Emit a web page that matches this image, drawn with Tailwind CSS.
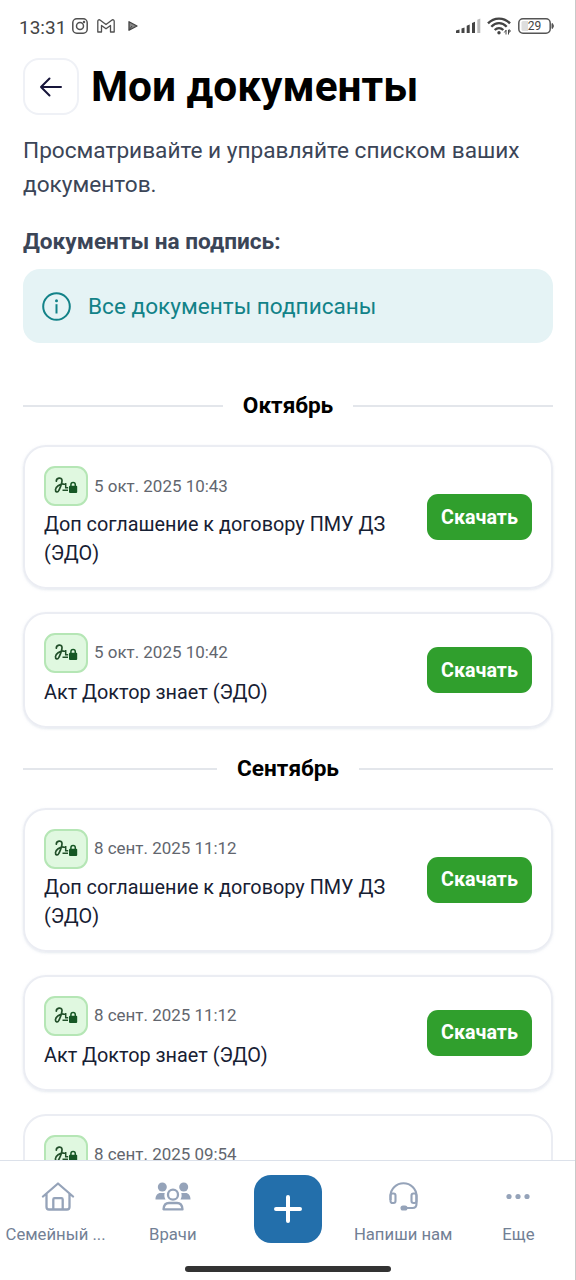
<!DOCTYPE html>
<html lang="ru">
<head>
<meta charset="utf-8">
<title>Мои документы</title>
<script src="https://cdn.jsdelivr.net/npm/@tailwindcss/browser@4"></script>
</head>
<body class="bg-white font-['Roboto',sans-serif]">
<svg class="hidden">
  <symbol id="sign" viewBox="0 0 24 18">
    <path d="M2.300 4.200C2.200 1 7.800-.3 8 3.200c.1 3.800-1.900 7.500-3.200 10.300C3.800 15.700 1.200 15.300 1.500 12.500 1.900 9.500 5.500 7.300 9 7" fill="none" stroke="#22502a" stroke-width="1.700" stroke-linecap="round"/>
    <path d="M9 7.300h3M11.700 6v4.700h2.500M8.500 13.300h5.500" fill="none" stroke="#22502a" stroke-width="1.500"/>
    <rect x="15" y="8.800" width="8.200" height="7.200" rx="1" fill="#155724"/>
    <path d="M16.900 9.300V7.700a2.200 2.200 0 0 1 4.400 0V9.300" fill="none" stroke="#155724" stroke-width="1.500"/>
  </symbol>
</svg>
<div class="relative flex h-[1280px] w-[576px] flex-col overflow-hidden border-r border-[#c9c9c9] bg-white">
  <header class="flex h-[52px] shrink-0 items-center justify-between pl-[19px] pr-[21px]">
    <div class="flex items-center text-[#444]">
      <span class="mt-[2px] w-[53px] text-[19px] leading-none">13:31</span>
      <svg class="h-4 w-4" viewBox="0 0 16 16" fill="none" stroke="#505050" stroke-width="1.500"><rect x=".8" y=".8" width="14.400" height="14.400" rx="4"/><circle cx="8" cy="8" r="3.500"/><circle cx="12" cy="4" r=".5"/></svg>
      <svg class="ml-[9px] h-[14px] w-[18px]" viewBox="0 0 18 14" fill="none" stroke="#505050" stroke-width="1.300" stroke-linejoin="round"><path d="M.8 2.300C.8.700 2.300.4 3.300 1.200L9 5.600l5.700-4.400c1-.8 2.500-.5 2.500 1.100V13h-3.700V6.400L9 9.800 4.500 6.400V13H.8Z"/></svg>
      <svg class="ml-[13px] h-[10px] w-[10px]" viewBox="0 0 10 10"><path d="M1 .7 9 5 1 9.300Z" fill="#888" stroke="#444" stroke-width="1.300" stroke-linejoin="round"/><path d="M1 9 4 5" stroke="#444"/></svg>
    </div>
    <div class="flex items-center">
      <svg class="h-4 w-[25px]" viewBox="0 0 25 16" fill="#444"><path d="M0 12.500 3.500 11.500V15H0ZM5.500 10.500 8.500 9.500V15h-3ZM10.700 7.800l3-1.200V15h-3ZM16 5l3-1.200V15h-3Z"/><path d="M21.300 1.700l3-1.200V15h-3Z" fill="#bbb"/></svg>
      <svg class="ml-[6px] h-[18px] w-[24px]" viewBox="0 0 24 18" fill="none" stroke="#444" stroke-width="2.300"><path d="M1 6.400C7-.1 17-.1 23 6.400M4.300 9.800c4.500-4.800 10.900-4.800 15.400 0M7.700 13c2.500-2.600 6.100-2.600 8.600 0"/><circle cx="12" cy="15.700" r="1.700" fill="#444" stroke="none"/><path d="M19 13v4.500M17.300 15.500l1.700-2.300M21.500 17.500v-4.500h1.500v2h-1.500" stroke-width="1"/></svg>
      <div class="relative ml-[7px] h-4 w-[36px]">
        <svg class="absolute inset-0 h-4 w-[36px]" viewBox="0 0 36 16" fill="none"><rect x=".8" y=".8" width="31.400" height="14.400" rx="4.200" stroke="#555" stroke-width="1.500"/><path d="M5 3h5v10H5a1.500 1.500 0 0 1-1.500-1.500v-7A1.500 1.500 0 0 1 5 3Z" fill="#dedede"/><path d="M34 5.500c1.800.3 1.800 4.700 0 5Z" fill="#555" stroke="#555"/></svg>
        <span class="relative block w-[33px] text-center text-[12px] leading-[17px] text-[#444]">29</span>
      </div>
    </div>
  </header>
  <main class="flex h-[1108px] shrink-0 flex-col overflow-hidden px-[23px] pt-[6px] pr-[22px]">
    <div class="flex h-[57px] shrink-0 items-center">
      <button class="flex h-[57px] w-[56px] items-center justify-center rounded-[16px] border-2 border-[#eff1f6]">
        <svg class="h-[20px] w-[24px]" viewBox="0 0 24 20" fill="none" stroke="#17153a" stroke-width="2" stroke-linecap="round" stroke-linejoin="round"><path d="M22 10H2M10.500 1.500 2 10l8.500 8.500"/></svg>
      </button>
      <h1 class="ml-[12px] mt-[2px] whitespace-nowrap text-[42.400px] font-bold leading-none text-black">Мои документы</h1>
    </div>
    <p class="mt-[19px] shrink-0 text-[22.640px] leading-[34px] text-[#3b4557]">Просматривайте и управляйте списком ваших документов.</p>
    <h2 class="mt-[23px] shrink-0 text-[22.620px] font-bold leading-[34px] text-[#3b4557]">Документы на подпись:</h2>
    <div class="mt-[10px] flex h-[74px] shrink-0 items-center rounded-[17px] bg-[#e5f3f5] pl-[19px]">
      <svg class="h-[29px] w-[29px]" viewBox="0 0 29 29" fill="none" stroke="#128288" stroke-width="2"><circle cx="14.500" cy="14.500" r="13.300"/><path d="M14.500 12.200v9.300"/><circle cx="14.500" cy="8.700" r="1.500" fill="#128288" stroke="none"/></svg>
      <span class="ml-[17px] mt-[2px] text-[22.620px] text-[#128288]">Все документы подписаны</span>
    </div>
    <div class="mt-[46px] flex h-[34px] shrink-0 items-center gap-[20px]"><div class="h-[1.500px] flex-1 bg-[#e3e6eb]"></div><h3 class="text-[22.620px] font-bold">Октябрь</h3><div class="h-[1.500px] flex-1 bg-[#e3e6eb]"></div></div>

    <article class="mt-[22px] flex h-[144px] shrink-0 items-center justify-between rounded-[23px] border-2 border-[#ebedf3] px-[19px] shadow-sm shadow-slate-300/40">
      <div><div class="flex items-center"><span class="flex h-[40px] w-[44px] items-center justify-center rounded-[11px] border-2 border-[#b5e6b5] bg-[#e0f8e0]"><svg class="h-[18px] w-[24px]"><use href="#sign"/></svg></span><time class="ml-[6px] mt-px text-[16.950px] text-[#62666e]">5 окт. 2025 10:43</time></div><p class="mt-[5.500px] w-[360px] text-[19.840px] leading-[28.300px] text-[#172033]">Доп соглашение к договору ПМУ ДЗ (ЭДО)</p></div>
      <button class="h-[46px] w-[105px] shrink-0 rounded-[11px] bg-[#309f2d] pt-px text-[19.700px] font-bold text-white">Скачать</button>
    </article>
    <article class="mt-[23px] flex h-[116px] shrink-0 items-center justify-between rounded-[23px] border-2 border-[#ebedf3] px-[19px] shadow-sm shadow-slate-300/40">
      <div><div class="flex items-center"><span class="flex h-[40px] w-[44px] items-center justify-center rounded-[11px] border-2 border-[#b5e6b5] bg-[#e0f8e0]"><svg class="h-[18px] w-[24px]"><use href="#sign"/></svg></span><time class="ml-[6px] text-[16.950px] text-[#62666e]">5 окт. 2025 10:42</time></div><p class="mt-[6px] w-[360px] text-[19.840px] leading-[28.300px] text-[#172033]">Акт Доктор знает (ЭДО)</p></div>
      <button class="h-[46px] w-[105px] shrink-0 rounded-[11px] bg-[#309f2d] pt-px text-[19.700px] font-bold text-white">Скачать</button>
    </article>
    <div class="mt-[24px] flex h-[34px] shrink-0 items-center gap-[20px]"><div class="h-[1.500px] flex-1 bg-[#e3e6eb]"></div><h3 class="text-[22.620px] font-bold">Сентябрь</h3><div class="h-[1.500px] flex-1 bg-[#e3e6eb]"></div></div>
    <article class="mt-[22px] flex h-[144px] shrink-0 items-center justify-between rounded-[23px] border-2 border-[#ebedf3] px-[19px] shadow-sm shadow-slate-300/40">
      <div><div class="flex items-center"><span class="flex h-[40px] w-[44px] items-center justify-center rounded-[11px] border-2 border-[#b5e6b5] bg-[#e0f8e0]"><svg class="h-[18px] w-[24px]"><use href="#sign"/></svg></span><time class="ml-[6px] text-[16.950px] text-[#62666e]">8 сент. 2025 11:12</time></div><p class="mt-[5.500px] w-[360px] text-[19.840px] leading-[28.300px] text-[#172033]">Доп соглашение к договору ПМУ ДЗ (ЭДО)</p></div>
      <button class="h-[46px] w-[105px] shrink-0 rounded-[11px] bg-[#309f2d] text-[19.700px] font-bold text-white">Скачать</button>
    </article>
    <article class="mt-[23px] flex h-[116px] shrink-0 items-center justify-between rounded-[23px] border-2 border-[#ebedf3] px-[19px] shadow-sm shadow-slate-300/40">
      <div><div class="flex items-center"><span class="flex h-[40px] w-[44px] items-center justify-center rounded-[11px] border-2 border-[#b5e6b5] bg-[#e0f8e0]"><svg class="h-[18px] w-[24px]"><use href="#sign"/></svg></span><time class="ml-[6px] text-[16.950px] text-[#62666e]">8 сент. 2025 11:12</time></div><p class="mt-[6px] w-[360px] text-[19.840px] leading-[28.300px] text-[#172033]">Акт Доктор знает (ЭДО)</p></div>
      <button class="h-[46px] w-[105px] shrink-0 rounded-[11px] bg-[#309f2d] text-[19.700px] font-bold text-white">Скачать</button>
    </article>
    <article class="mt-[23px] h-[116px] shrink-0 rounded-[23px] border-2 border-[#ebedf3] px-[19px] pt-[19px]">
      <div class="flex items-center"><span class="flex h-[40px] w-[44px] items-center justify-center rounded-[11px] border-2 border-[#b5e6b5] bg-[#e0f8e0]"><svg class="h-[18px] w-[24px]"><use href="#sign"/></svg></span><time class="ml-[6px] text-[16.950px] text-[#62666e]">8 сент. 2025 09:54</time></div>
    </article>
  </main>
  <nav class="flex h-[120px] shrink-0 flex-col items-center border-t border-[#dce1ea] bg-white">
    <div class="grid h-[105px] w-[576px] shrink-0 grid-cols-5 self-start text-[16.700px] leading-[24px] text-[#728095]">
      <div class="flex flex-col items-center pt-[21px]">
        <svg class="h-[29px] w-[34px]" viewBox="0 0 34 29" fill="none" stroke="#95a3b9" stroke-width="2.300" stroke-linecap="round" stroke-linejoin="round"><path d="M2 14.500 17 1.500l15 13M5.500 12v13c0 1.500 1 2.500 2.500 2.500h18c1.500 0 2.500-1 2.500-2.500V12M12.300 27V17.500c0-.8.500-1.300 1.300-1.300h6.800c.8 0 1.300.5 1.300 1.300V27"/></svg>
        <span class="mt-[12px] -ml-[4px] whitespace-nowrap">Семейный ...</span>
      </div>
      <div class="flex flex-col items-center pt-[21px]">
        <svg class="h-[29px] w-[36px]" viewBox="0 0 36 29" fill="#95a3b9"><circle cx="7.300" cy="5" r="4.500"/><circle cx="28.700" cy="5" r="4.500"/><path d="M.5 17.500c0-4 2-6.500 5-6.500h4.200c-.7 2.400-.3 4.500.8 6.500ZM35.500 17.500c0-4-2-6.500-5-6.500h-4.200c.7 2.400.3 4.500-.8 6.500Z"/><g fill="none" stroke="#95a3b9" stroke-width="2.300"><circle cx="18" cy="12.700" r="5"/><path d="M8.500 27.300c.3-4.300 2.200-6.300 5.500-6.300h8c3.300 0 5.200 2 5.500 6.300Z" stroke-linejoin="round"/></g></svg>
        <span class="mt-[12px]">Врачи</span>
      </div>
      <div class="flex justify-center pt-[14px]">
        <button class="flex h-[68px] w-[68px] items-center justify-center rounded-[17px] bg-[#236fab]"><svg class="h-[28px] w-[28px]" viewBox="0 0 28 28" stroke="white" stroke-width="4" stroke-linecap="round"><path d="M14 2v24M2 14h24"/></svg></button>
      </div>
      <div class="flex flex-col items-center pt-[21px]">
        <svg class="h-[29px] w-[29px]" viewBox="0 0 29 29" fill="none" stroke="#95a3b9" stroke-width="2.100" stroke-linejoin="round"><path d="M1.500 18v-4a13 12.700 0 0 1 26 0v8c0 2.500-1.500 4-4 4H16"/><rect x="1.500" y="11.500" width="5" height="9.500" rx="2"/><rect x="22.500" y="11.500" width="5" height="9.500" rx="2"/><rect x="12.500" y="24.500" width="5" height="3" rx="1.500" fill="#95a3b9"/></svg>
        <span class="mt-[12px] whitespace-nowrap">Напиши нам</span>
      </div>
      <div class="flex flex-col items-center pt-[21px]">
        <svg class="h-[29px] w-[24px]" viewBox="0 0 24 29" fill="#95a3b9"><circle cx="3" cy="14.500" r="2.600"/><circle cx="12" cy="14.500" r="2.600"/><circle cx="21" cy="14.500" r="2.600"/></svg>
        <span class="mt-[12px]">Еще</span>
      </div>
    </div>
    <div class="h-[6px] w-[206px] rounded-full bg-[#333]"></div>
  </nav>
</div>
</body>
</html>
